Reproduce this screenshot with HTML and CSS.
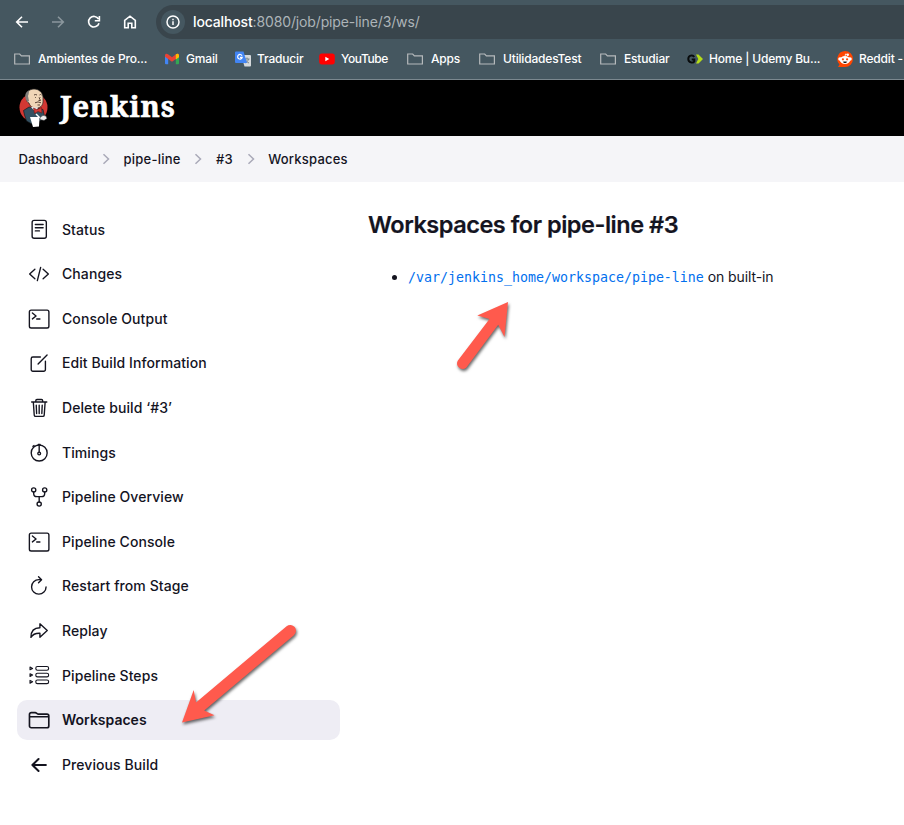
FILE: index.html
```html
<!DOCTYPE html>
<html lang="en">
<head>
<meta charset="utf-8">
<title>Workspaces for pipe-line #3</title>
<link rel="stylesheet" href="styles.css">
</head>
<body>
<header class="browser">
  <div class="toolbar">
    <svg class="nav" viewBox="0 0 16 16"><path d="M14 8H3M8 2.7 2.7 8 8 13.3"/></svg>
    <svg class="nav dim" viewBox="0 0 16 16"><path d="M2 8h11M8 2.7 13.3 8 8 13.3"/></svg>
    <svg class="nav" viewBox="0 0 16 16"><path d="M13 9.2A5.3 5.3 0 1 1 12.5 5M13.4 2v4.700H8.800"/></svg>
    <svg class="nav" viewBox="0 0 16 16"><path d="M2.7 6.3 8 2.2l5.3 4.1v7.5H9.8V9.3H6.2v4.5H2.7z"/></svg>
    <div class="address">
      <span class="info"><svg viewBox="0 0 16 16"><circle cx="8" cy="8" r="6"/><path d="M8 7.3v3.6M8 4.7v1.5"/></svg></span>
      <span class="url"><b>localhost</b>:8080/job/pipe-line/3/ws/</span>
    </div>
  </div>
  <nav class="bookmarks">
    <a class="folder"><svg viewBox="0 0 16 16"><path d="M.7 13V3h5l1.7 1.9h8V13z"/></svg><span>Ambientes de Pro...</span></a>
    <a><svg viewBox="0 0 16 16"><path fill="#4285f4" d="M1 4.5 4.2 7v6.3H2a1 1 0 0 1-1-1z"/><path fill="#34a853" d="M15 4.5 11.8 7v6.3H14a1 1 0 0 0 1-1z"/><path fill="#ea4335" d="M1 4.4C1 2.7 2.6 2.2 4 3.2l4 3 4-3c1.400-1 3-.5 3 1.200v1.400L8 10.800 1 5.800z"/><path fill="#fbbc04" d="M11.800 3.300C13.300 2.200 15 2.900 15 4.500v1.700l-3.200 2.300z"/></svg><span>Gmail</span></a>
    <a><svg viewBox="0 0 16 16"><path fill="#d5d9dc" d="M6 4h9a1 1 0 0 1 1 1v9.500a1 1 0 0 1-1 1H9.500z"/><path fill="none" stroke="#78858b" d="M9.500 8h5M12 6.500V8m1.500 0c-.5 2-1.500 3-3.500 4m.5-3c1 1.500 2 2.300 3.500 3"/><path fill="#4285f4" d="M1 .5h7.500L12 12H1a1 1 0 0 1-1-1V1.500a1 1 0 0 1 1-1z"/><path fill="none" stroke="#fff" stroke-width="1.200" d="M7 4.700A2.300 2.300 0 1 0 7.200 6.300H5"/></svg><span>Traducir</span></a>
    <a><svg viewBox="0 0 16 16"><rect x=".2" y="2.500" width="15.600" height="11" rx="2.700" fill="#f00"/><path fill="#fff" d="m6.300 5.700 4 2.300-4 2.300z"/></svg><span class="tight">YouTube</span></a>
    <a class="folder"><svg viewBox="0 0 16 16"><path d="M.7 13V3h5l1.700 1.900h8V13z"/></svg><span>Apps</span></a>
    <a class="folder"><svg viewBox="0 0 16 16"><path d="M.7 13V3h5l1.700 1.900h8V13z"/></svg><span>UtilidadesTest</span></a>
    <a class="folder"><svg viewBox="0 0 16 16"><path d="M.7 13V3h5l1.700 1.900h8V13z"/></svg><span>Estudiar</span></a>
    <a><svg viewBox="0 0 16 16"><path fill="none" stroke="#080b0c" stroke-width="2" d="M7.200 5.900C5.800 3.500 1.300 4.200 1.300 8s5 4.500 6 2.300V8.500H4.700"/><path fill="#b5dc19" d="M9 3.500h2.500L16 8l-4.500 4.500H9L11.300 8z"/></svg><span>Home | Udemy Bu...</span></a>
    <a><svg viewBox="0 0 16 16"><path fill="#ff4500" d="M8 0a8 8 0 1 1 0 16H1l1.500-2.500A8 8 0 0 1 8 0z"/><g fill="#fff"><circle cx="3" cy="8" r="1.800"/><circle cx="13" cy="8" r="1.800"/><ellipse cx="8" cy="9" rx="5.200" ry="4"/><circle cx="10.800" cy="3.700" r="1.200"/></g><path fill="none" stroke="#fff" stroke-width=".8" d="m8 5.500.5-2.500 2 .6"/><circle cx="5.900" cy="8.300" r="1.100" fill="#ff4500"/><circle cx="10.100" cy="8.300" r="1.100" fill="#ff4500"/><path d="M5.700 10.700q2.300-.6 4.600 0-2.300 2.500-4.600 0z"/></svg><span>Reddit -</span></a>
  </nav>
</header>
<div class="brand">
  <svg class="butler" viewBox="0 0 30 40">
    <ellipse cx="14.500" cy="19.500" rx="14" ry="14" fill="#d33833"/>
    <path d="M4.500 22.500 10 19l8 1 6 1.500 2 9-5.500 2.500-6 4-7-4-2-6z" fill="#335061" stroke="#111" stroke-width=".6"/>
    <path d="M7.500 10C7 4 10.500 1 15 1s8.500 3 9 8v5c-.5 4-3 6-6.500 6C13 20 11 18 10 15c-1.500-.5-2.500-2-2.500-5z" fill="#f0d6b7" stroke="#222" stroke-width=".7"/>
    <path d="M7.200 12C5 7 7 3.500 10.500 2c-1 2.500-.5 4-1.500 6l1 5-1.500 1z" fill="#817d79"/>
    <path d="M15 7q1.500-1 3 0M20.500 7q1-1 2 0M16.500 9v.8M21 9v.8M20 9.500l1.500 3h-2M16 14.800q3-1.800 6 0M18.500 17h2.500" fill="none" stroke="#594438" stroke-width="1"/>
    <path d="m12 19 5 5.500 2-5z" fill="#fff"/>
    <path d="m14.500 20 3.500 1.500 4.500-2 .5 5.500-4-1.500-3.500 2z" fill="#d33833" stroke="#681716" stroke-width=".6"/>
    <path d="m17 26 4 4" stroke="#fff" stroke-width="1.400"/>
    <path d="M11 29h9.500l-.5 9.500-6 .5z" fill="#fff"/>
    <path d="M21 29.500q3-3.500 6-1.500l1 2.500-3 2-4-1z" fill="#eee" stroke="#222" stroke-width=".5"/>
  </svg>
  <span class="wordmark">Jenkins</span>
</div>
<nav class="crumbs">
  <a>Dashboard</a><svg viewBox="0 0 8 12"><path d="m1.500 1.200 5 4.800-5 4.800"/></svg>
  <a>pipe-line</a><svg viewBox="0 0 8 12"><path d="m1.500 1.200 5 4.800-5 4.800"/></svg>
  <a>#3</a><svg viewBox="0 0 8 12"><path d="m1.500 1.200 5 4.800-5 4.800"/></svg>
  <a>Workspaces</a>
</nav>
<div class="page">
  <nav class="tasks">
    <a><svg viewBox="0 0 24 24"><rect x="4.500" y="1.500" width="15.500" height="19.500" rx="2.300"/><path d="M8 6h8.500M8 9.500h8.500M8 13h4.500"/></svg><span>Status</span></a>
    <a><svg viewBox="0 0 24 24"><path d="m7.500 6.800-5.700 5.200 5.700 5.200M16.500 6.800l5.700 5.200-5.700 5.200M13.800 4.800l-3.600 14.400"/></svg><span>Changes</span></a>
    <a><svg viewBox="0 0 24 24"><rect x="1.500" y="2.300" width="21.300" height="19.500" rx="2"/><path d="m4.800 5.500 4 3.200-4 3.200M9.500 12h3.500"/></svg><span>Console Output</span></a>
    <a><svg viewBox="0 0 24 24"><path d="M13.500 5.500H5.300A1.800 1.800 0 0 0 3.500 7.300v11.900A1.800 1.800 0 0 0 5.300 21h11.900a1.800 1.800 0 0 0 1.800-1.800V10M11 13 20.800 3.200"/></svg><span>Edit Build Information</span></a>
    <a><svg viewBox="0 0 24 24"><path d="M4 5.500h16.500M5.800 5.500l1 14.200c.1.900.7 1.500 1.500 1.500h7.900c.9 0 1.400-.6 1.500-1.500l1-14.200M8.500 5.500V4c0-.9.5-1.300 1.300-1.300h4.900c.8 0 1.300.5 1.300 1.300v1.500M12.200 9v9M9 9l.4 9M15.500 9l-.4 9"/></svg><span>Delete build ‘#3’</span></a>
    <a><svg viewBox="0 0 24 24"><circle cx="12.200" cy="12" r="8.700"/><path d="M12.200 3v8M5.400 4.700l1.200-.8M11.200 2.700h2"/><circle cx="12.200" cy="12.600" r="1.500"/></svg><span>Timings</span></a>
    <a><svg viewBox="0 0 24 24"><circle cx="6.200" cy="4.300" r="2.300"/><circle cx="18.200" cy="4.300" r="2.300"/><circle cx="12.200" cy="19.700" r="2.300"/><path d="M6.200 6.600v1.500c0 2 1.500 3.500 3.500 3.500h5c2 0 3.500-1.500 3.500-3.500V6.600M12.200 11.600v5.800"/></svg><span>Pipeline Overview</span></a>
    <a><svg viewBox="0 0 24 24"><rect x="1.500" y="2.300" width="21.300" height="19.500" rx="2"/><path d="m4.800 5.500 4 3.200-4 3.200M9.500 12h3.500"/></svg><span>Pipeline Console</span></a>
    <a><svg viewBox="0 0 24 24"><path d="M19.700 13a7.900 7.900 0 1 1-7.900-7.900h2.700M11.500 1.800l3.300 3.300-3.300 3.300"/></svg><span>Restart from Stage</span></a>
    <a><svg viewBox="0 0 24 24"><path d="M21 11.500 13 4.200v4.300C6 8.500 3.200 12.500 3.200 19c2-3.500 5-4.700 9.800-4.500v4.300z"/></svg><span>Replay</span></a>
    <a><svg class="thin" viewBox="0 0 24 24"><rect x="8.500" y="1.700" width="14" height="4" rx="1.800"/><rect x="8.500" y="9" width="14" height="4" rx="1.800"/><rect x="8.500" y="16.300" width="14" height="4" rx="1.800"/><path d="m2.200 2.200 2.800 1.500-2.800 1.500zM2.200 9.500 5 11l-2.800 1.500zM2.200 16.800 5 18.300l-2.800 1.500z"/></svg><span>Pipeline Steps</span></a>
    <a class="active"><svg viewBox="0 0 24 24"><path d="M1.600 8.500h21.100M1.600 18.500V6a2 2 0 0 1 2-2h4.200c1.600 0 2 1.600 3.600 1.600h9.300a2 2 0 0 1 2 2v10.900a2 2 0 0 1-2 2H3.600a2 2 0 0 1-2-2z"/></svg><span>Workspaces</span></a>
    <a><svg class="bold" viewBox="0 0 24 24"><path d="m11.500 5.500-6.700 6.500 6.700 6.500M5 12h14.500"/></svg><span>Previous Build</span></a>
  </nav>
  <main>
    <h1>Workspaces for pipe-line #3</h1>
    <ul><li><a class="path">/var/jenkins_home/workspace/pipe-line</a> <span class="node">on built-in</span></li></ul>
  </main>
</div>
<svg class="arrows" viewBox="0 0 904 825">
  <path d="M182 722.500 193.700 690 196 702.500 286.600 626.300A5.700 5.700 0 0 1 293.900 635.200L204.200 710.500 214.500 715.200z"/>
  <path d="M508 302 477.300 315.500 489.500 319 457.700 360.800A5.600 5.600 0 0 0 466.400 367.500L498.200 324.700 504.500 337z"/>
</svg>
</body>
</html>
```
FILE: styles.css
```css
* { box-sizing: border-box; }
body {
  margin: 0;
  width: 904px;
  height: 825px;
  overflow: hidden;
  background: #fff;
  color: #14141f;
  font: 14px/20px Inter, "Liberation Sans", sans-serif;
}
svg { flex: none; }
span, a { white-space: nowrap; }

.browser {
  height: 80px;
  background: #455760;
  border-bottom: 1px solid #7b888f;
  color: #fff;
}
.toolbar {
  height: 44px;
  display: flex;
  align-items: center;
  gap: 20px;
  padding-left: 14px;
}
.nav {
  width: 16px;
  height: 16px;
  fill: none;
  stroke: #fff;
  stroke-width: 1.6;
}
.nav.dim { stroke: #8b979d; }
.address {
  flex: 1;
  height: 34px;
  margin: 0 -20px 0 -2px;
  padding-left: 5px;
  border-radius: 17px 0 0 17px;
  background: #39454c;
  display: flex;
  align-items: center;
  gap: 8px;
}
.info {
  width: 24px;
  height: 24px;
  border-radius: 50%;
  background: #455760;
  display: grid;
  place-items: center;
}
.info svg {
  width: 16px;
  height: 16px;
  fill: none;
  stroke: #fff;
  stroke-width: 1.5;
}
.url { color: #adb4b8; font-size: 14px; letter-spacing: -0.14px; }
.url b { color: #fff; font-weight: 500; }
.bookmarks {
  height: 30px;
  padding-left: 14px;
  display: grid;
  grid-template-columns: 150px 71px 84px 88px 72px 121px 87px 150px 90px;
  align-items: center;
  font-size: 12px;
  font-weight: 500;
  letter-spacing: -0.17px;
}
.bookmarks a { display: flex; align-items: center; gap: 6px; }
.bookmarks .folder { gap: 8px; }
.bookmarks .tight { letter-spacing: -0.4px; }
.bookmarks svg { width: 16px; height: 16px; }
.folder path { fill: none; stroke: #b5b9bb; stroke-width: 1.2; }

.brand {
  height: 56px;
  background: #000;
  display: flex;
  align-items: center;
  padding-left: 19px;
  gap: 11px;
}
.butler { width: 30px; height: 40px; }
.wordmark {
  color: #fff;
  font: bold 29px/40px "Noto Serif", "DejaVu Serif", "Liberation Serif", serif;
  letter-spacing: 0.9px;
  -webkit-text-stroke: 0.6px #fff;
  padding-bottom: 5px;
}
.crumbs {
  height: 46px;
  background: #f5f5f8;
  display: flex;
  align-items: center;
  padding-left: 18.4px;
  font-size: 13px;
  font-weight: 500;
  letter-spacing: 0.22px;
}
.crumbs svg {
  width: 8px;
  height: 12px;
  margin: 0 13.7px;
  fill: none;
  stroke: #a9a9b8;
  stroke-width: 1.5;
}

.page { display: flex; padding: 27.6px 0 0 17px; }
.tasks {
  width: 323px;
  display: flex;
  flex-direction: column;
  gap: 4.6px;
  font-weight: 500;
  letter-spacing: 0.08px;
}
.tasks a {
  height: 40px;
  padding-left: 10.5px;
  border-radius: 10px;
  display: flex;
  align-items: center;
  gap: 12.5px;
}
.tasks svg {
  width: 22px;
  height: 22px;
  fill: none;
  stroke: #14141f;
  stroke-width: 1.5;
  stroke-linecap: round;
  stroke-linejoin: round;
}
.tasks svg.bold { stroke-width: 2.2; }
.tasks svg.thin { stroke-width: 1.2; }
.tasks .active { background: #eeedf4; font-weight: 600; letter-spacing: 0; }
.tasks .active svg { stroke-width: 1.8; }
main { padding-left: 28px; margin-top: -0.6px; }
h1 {
  margin: 0;
  font-size: 23.5px;
  line-height: 31px;
  font-weight: 600;
  letter-spacing: -0.47px;
  -webkit-text-stroke: 0.2px #14141f;
}
ul { margin: 27px 0 0; padding-left: 40px; }
.path { color: #006fee; font: 13.29px/20px "DejaVu Sans Mono", monospace; }
.node { letter-spacing: -0.1px; }
.arrows {
  position: absolute;
  left: 0;
  top: 0;
  width: 904px;
  height: 825px;
  pointer-events: none;
  fill: #ff5a4d;
  filter: drop-shadow(1px 2px 1.5px rgba(0, 0, 0, .6));
}
```
